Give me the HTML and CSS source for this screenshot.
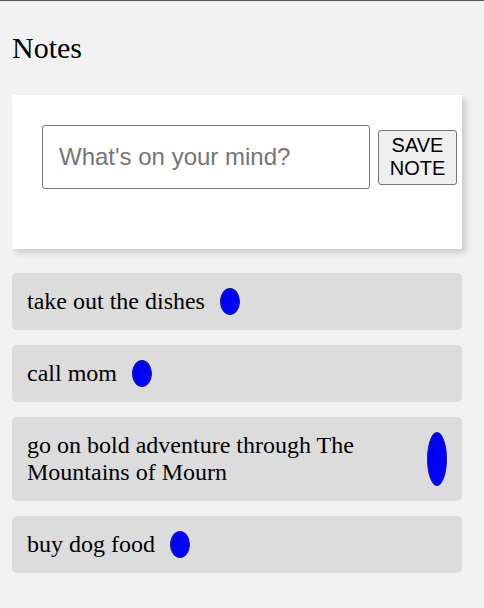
FILE: index.html
```html
<!DOCTYPE html>
<html lang="en">
<head>
<meta charset="utf-8">
<title>Notes</title>
<link rel="stylesheet" href="styles.css">
</head>
<body>
<div class="app">
  <h1 class="title">Notes</h1>
  <div class="card">
    <form class="note-form">
      <input class="note-input" type="text" placeholder="What's on your mind?">
      <button class="save-btn" type="button">SAVE NOTE</button>
    </form>
  </div>
  <ul class="notes">
    <li class="note"><span class="note-text">take out the dishes</span><button class="dot" type="button" aria-label="delete"></button></li>
    <li class="note"><span class="note-text">call mom</span><button class="dot" type="button" aria-label="delete"></button></li>
    <li class="note"><span class="note-text">go on bold adventure through The Mountains of Mourn</span><button class="dot" type="button" aria-label="delete"></button></li>
    <li class="note"><span class="note-text">buy dog food</span><button class="dot" type="button" aria-label="delete"></button></li>
  </ul>
</div>
</body>
</html>
```

FILE: styles.css
```css
html, body {
  margin: 0;
  padding: 0;
}
body {
  background: #f2f2f2;
  border-top: 1px solid #575757;
  font-family: "Liberation Serif", "Times New Roman", serif;
  color: #000;
}
.app {
  padding: 0 12px;
}
.title {
  font-size: 30px;
  line-height: 36px;
  font-weight: normal;
  margin: 29px 0 29px;
}
.card {
  width: 450px;
  box-sizing: border-box;
  background: #fff;
  padding: 30px 5px 60px 30px;
  box-shadow: 4px 4px 6px rgba(0, 0, 0, 0.16);
}
.note-form {
  display: flex;
  align-items: center;
  gap: 8px;
  margin: 0;
}
.note-input {
  width: 328px;
  height: 64px;
  box-sizing: border-box;
  padding: 0 16px;
  border: 1px solid #767676;
  border-radius: 3px;
  font-family: "Liberation Sans", Arial, sans-serif;
  font-size: 24px;
  color: #000;
  background: #fff;
}
.note-input::placeholder {
  color: #757575;
}
.save-btn {
  width: 79px;
  box-sizing: border-box;
  padding: 3px 4px 4px;
  border: 1px solid #767676;
  border-radius: 3px;
  background: #efefef;
  font-family: "Liberation Sans", Arial, sans-serif;
  font-size: 20px;
  line-height: 23px;
  color: #000;
}
.notes {
  list-style: none;
  margin: 24px 0 0;
  padding: 0;
  width: 450px;
  display: flex;
  flex-direction: column;
  gap: 15px;
}
.note {
  display: flex;
  align-items: stretch;
  background: #dcdcdc;
  border-radius: 5px;
  padding: 15px;
  font-size: 24px;
  line-height: 27px;
}
.note-text {
  flex: 0 1 auto;
}
.dot {
  flex: 0 0 20px;
  width: 20px;
  margin: 0 0 0 15px;
  padding: 0;
  background: #0000ff;
  border: 1px solid #1c1c8c;
  border-radius: 50%;
}
```
